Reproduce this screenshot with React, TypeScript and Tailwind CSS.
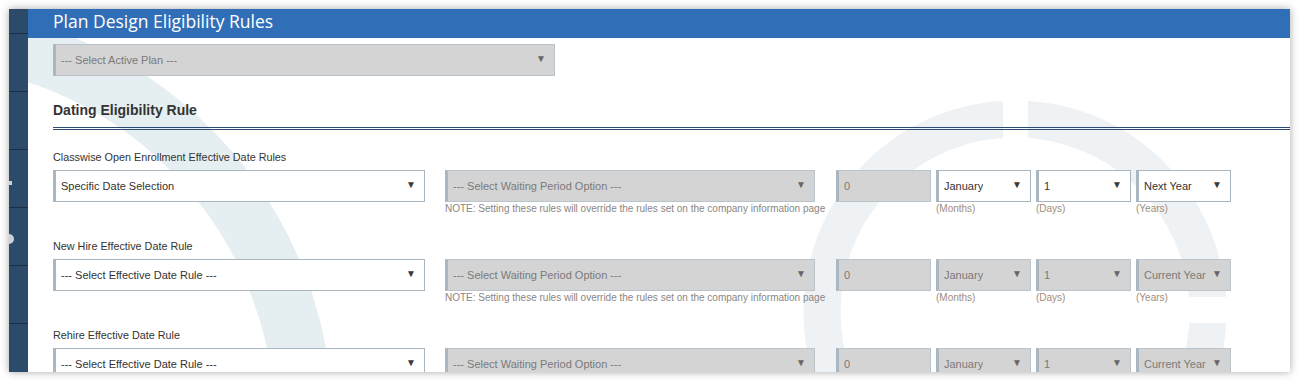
import React from 'react';

type Field = {
  text: string;
  width: string;
  disabled?: boolean;
  arrow?: boolean;
  sub?: string;
};

const rules = [
  {
    label: 'Classwise Open Enrollment Effective Date Rules',
    main: 'Specific Date Selection',
    year: 'Next Year',
    enabled: true,
  },
  {
    label: 'New Hire Effective Date Rule',
    main: '--- Select Effective Date Rule ---',
    year: 'Current Year',
    enabled: false,
  },
  {
    label: 'Rehire Effective Date Rule',
    main: '--- Select Effective Date Rule ---',
    year: 'Current Year',
    enabled: false,
  },
];

const Box = ({ text, width, disabled, arrow = true, sub }: Field) => (
  <div className={`flex flex-col ${width}`}>
    <div
      className={`flex h-[32px] items-center justify-between border border-l-[3px] pl-[5px] pr-[8px] text-[11px] ${
        disabled
          ? 'border-[#b9c4cc] border-l-[#aab6c0] bg-[#d4d4d4] text-[#7a7a7a]'
          : 'border-[#a9b5bf] border-l-[#aab6c0] bg-white text-[#333]'
      }`}
    >
      <span className="truncate whitespace-nowrap">{text}</span>
      {arrow && (
        <span className={`-mt-[3px] text-[10px] ${disabled ? 'text-[#666]' : 'text-[#3a3a3a]'}`}>▼</span>
      )}
    </div>
    {sub && <div className="mt-[1px] text-[10px] leading-[12px] text-[#a08c7a]">{sub}</div>}
  </div>
);

const App: React.FC = () => {
  return (
    <div
      className="min-h-screen bg-white pl-[9px] pt-[9px]"
      style={{ fontFamily: '"Liberation Sans", Arial, sans-serif' }}
    >
      <div className="flex h-[363px] w-[1281px] overflow-hidden shadow-[0_0_8px_rgba(0,0,0,0.35)]">
        {/* sidebar */}
        <aside className="flex w-[19px] shrink-0 flex-col overflow-hidden bg-[#2c4b6b]">
          <div className="h-[24px] shrink-0" />
          <div className="h-[58px] shrink-0 border-t border-[#1b2f44]" />
          <div className="h-[58px] shrink-0 border-t border-[#1b2f44]" />
          <div className="h-[58px] shrink-0 border-t border-[#1b2f44] pt-[31px]">
            <div className="h-[4px] w-[3px] bg-[#c9d1d9]" />
          </div>
          <div className="h-[58px] shrink-0 border-t border-[#1b2f44] pt-[26px]">
            <div className="-ml-[5px] h-[10px] w-[10px] rounded-full bg-[#c9d1d9]" />
          </div>
          <div className="h-[58px] shrink-0 border-t border-[#1b2f44]" />
          <div className="h-[58px] shrink-0 border-t border-[#1b2f44]" />
        </aside>

        <main className="flex min-w-0 flex-1 flex-col">
          <header className="flex h-[29px] shrink-0 items-center bg-[#306fb7] pl-[25px]">
            <h1
              className="-mt-[4px] text-[17.5px] text-white"
              style={{ fontFamily: '"Open Sans", "Noto Sans", sans-serif' }}
            >
              Plan Design Eligibility Rules
            </h1>
          </header>

          <div className="relative flex-1 overflow-hidden bg-white">
            {/* watermark */}
            <svg className="absolute left-0 top-0" width="1262" height="334" viewBox="0 0 1262 334">
              <circle cx="-113" cy="386" r="389" fill="none" stroke="#e5eef0" strokeWidth="58" />
              <circle cx="987" cy="274" r="193" fill="none" stroke="#eef2f5" strokeWidth="37" />
              <rect x="975" y="40" width="25" height="60" fill="#fff" />
              <rect x="1150" y="259" width="60" height="26" fill="#fff" />
            </svg>

            <div className="relative pl-[25px] pt-[6px]">
              <Box text="--- Select Active Plan ---" width="w-[502px]" disabled />

              <h2 className="mt-[26px] text-[14px] font-bold leading-[16px] text-[#333]">
                Dating Eligibility Rule
              </h2>
              <div className="mt-[9px] h-[3px] border-y border-[#2b4a74]" />

              <div className="mt-[20px] flex flex-col">
                {rules.map((r, i) => (
                  <div key={i} className="h-[89px]">
                    <div className="h-[14px] text-[10.8px] leading-[14px] text-[#333]">{r.label}</div>
                    <div className="mt-[6px] flex items-start">
                      <Box text={r.main} width="w-[372px]" />
                      <div className="ml-[20px] flex w-[370px] flex-col">
                        <Box text="--- Select Waiting Period Option ---" width="w-[370px]" disabled />
                        <div className="mt-[1px] whitespace-nowrap text-[10px] leading-[12px] text-[#8a8683]">
                          NOTE: Setting these rules will override the rules set on the company information page
                        </div>
                      </div>
                      <div className="ml-[21px] flex gap-[5px]">
                        <Box text="0" width="w-[95px]" disabled arrow={false} />
                        <Box text="January" width="w-[95px]" disabled={!r.enabled} sub="(Months)" />
                        <Box text="1" width="w-[95px]" disabled={!r.enabled} sub="(Days)" />
                        <Box text={r.year} width="w-[95px]" disabled={!r.enabled} sub="(Years)" />
                      </div>
                    </div>
                  </div>
                ))}
              </div>
            </div>
          </div>
        </main>
      </div>
    </div>
  );
};

export default App;
